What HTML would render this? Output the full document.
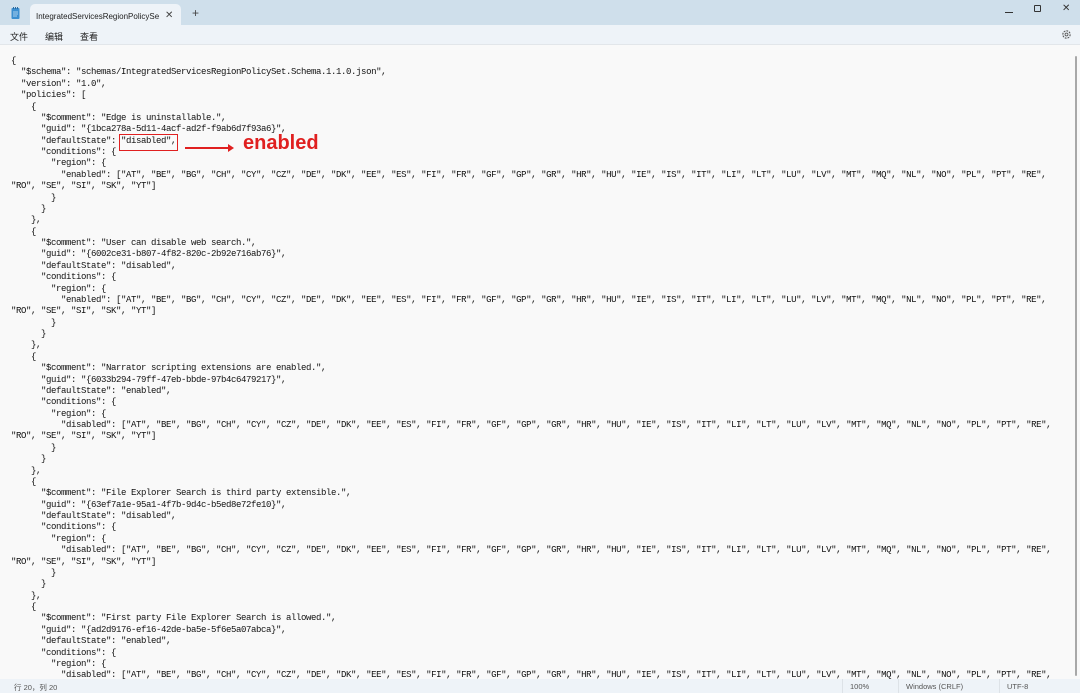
<!DOCTYPE html>
<html><head><meta charset="utf-8"><style>
*{margin:0;padding:0;box-sizing:border-box}
body{width:1080px;height:693px;overflow:hidden;background:#f9f9f9;font-family:"Liberation Sans","Noto Sans CJK SC",sans-serif;position:relative}
.title{position:absolute;left:0;top:0;width:1080px;height:25px;background:#cfdfeb}
.tab{position:absolute;left:30px;top:4px;width:151px;height:21px;background:#eef3f8;border-radius:5px 5px 0 0;font-size:8px;color:#222;padding:8px 0 0 6px}
.menu{position:absolute;left:0;top:25px;width:1080px;height:20px;background:#eef3f8;border-bottom:1px solid #e2e6ea;font-size:9px;color:#222}
.menu span{position:absolute;top:5px}
pre{position:absolute;left:11px;top:56px;font-family:"Liberation Mono",monospace;font-size:9px;letter-spacing:-0.4px;line-height:11.37px;color:#111;height:623px;overflow:hidden;width:1062px}
.status{position:absolute;left:0;top:679px;width:1080px;height:14px;background:#eef3f8;font-size:7.5px;color:#555}
.status span{position:absolute;top:3px}
.sep{position:absolute;top:0;width:1px;height:14px;background:#dde2e7}
</style></head><body>
<div class="title">
<svg style="position:absolute;left:11px;top:7px" width="9" height="12" viewBox="0 0 9 12"><rect x="0.5" y="1" width="8" height="11" rx="1" fill="#3d8fd0"/><rect x="2" y="0" width="1" height="2" fill="#2a6aa0"/><rect x="4" y="0" width="1" height="2" fill="#2a6aa0"/><rect x="6" y="0" width="1" height="2" fill="#2a6aa0"/><path d="M2 5h5M2 7h5M2 9h4" stroke="#cfe6f7" stroke-width="0.8"/></svg>
<div class="tab">IntegratedServicesRegionPolicySe<span style="position:absolute;left:135px;top:6px;font-size:10px;color:#444">✕</span></div>
<span style="position:absolute;left:192px;top:6px;font-size:12px;color:#444">+</span>
<div style="position:absolute;left:1005px;top:12px;width:8px;height:1px;background:#333"></div>
<div style="position:absolute;left:1034px;top:5px;width:7px;height:7px;border:1px solid #333;border-radius:1px"></div>
<span style="position:absolute;left:1062px;top:3px;font-size:10px;color:#333">✕</span>
</div>
<div class="menu"><span style="left:10px">文件</span><span style="left:45px">编辑</span><span style="left:80px">查看</span>
<svg style="position:absolute;left:1061px;top:4px" width="11" height="11" viewBox="0 0 12 12"><circle cx="6" cy="6" r="4" fill="none" stroke="#555" stroke-width="1.2" stroke-dasharray="2 1.1"/><circle cx="6" cy="6" r="1.6" fill="none" stroke="#555" stroke-width="0.9"/></svg></div>
<div style="position:absolute;left:1075px;top:56px;width:2px;height:620px;background:#a8a8a8;border-radius:1px"></div>
<pre>{
  "$schema": "schemas/IntegratedServicesRegionPolicySet.Schema.1.1.0.json",
  "version": "1.0",
  "policies": [
    {
      "$comment": "Edge is uninstallable.",
      "guid": "{1bca278a-5d11-4acf-ad2f-f9ab6d7f93a6}",
      "defaultState": "disabled",
      "conditions": {
        "region": {
          "enabled": ["AT", "BE", "BG", "CH", "CY", "CZ", "DE", "DK", "EE", "ES", "FI", "FR", "GF", "GP", "GR", "HR", "HU", "IE", "IS", "IT", "LI", "LT", "LU", "LV", "MT", "MQ", "NL", "NO", "PL", "PT", "RE",
"RO", "SE", "SI", "SK", "YT"]
        }
      }
    },
    {
      "$comment": "User can disable web search.",
      "guid": "{6002ce31-b807-4f82-820c-2b92e716ab76}",
      "defaultState": "disabled",
      "conditions": {
        "region": {
          "enabled": ["AT", "BE", "BG", "CH", "CY", "CZ", "DE", "DK", "EE", "ES", "FI", "FR", "GF", "GP", "GR", "HR", "HU", "IE", "IS", "IT", "LI", "LT", "LU", "LV", "MT", "MQ", "NL", "NO", "PL", "PT", "RE",
"RO", "SE", "SI", "SK", "YT"]
        }
      }
    },
    {
      "$comment": "Narrator scripting extensions are enabled.",
      "guid": "{6033b294-79ff-47eb-bbde-97b4c6479217}",
      "defaultState": "enabled",
      "conditions": {
        "region": {
          "disabled": ["AT", "BE", "BG", "CH", "CY", "CZ", "DE", "DK", "EE", "ES", "FI", "FR", "GF", "GP", "GR", "HR", "HU", "IE", "IS", "IT", "LI", "LT", "LU", "LV", "MT", "MQ", "NL", "NO", "PL", "PT", "RE",
"RO", "SE", "SI", "SK", "YT"]
        }
      }
    },
    {
      "$comment": "File Explorer Search is third party extensible.",
      "guid": "{63ef7a1e-95a1-4f7b-9d4c-b5ed8e72fe10}",
      "defaultState": "disabled",
      "conditions": {
        "region": {
          "disabled": ["AT", "BE", "BG", "CH", "CY", "CZ", "DE", "DK", "EE", "ES", "FI", "FR", "GF", "GP", "GR", "HR", "HU", "IE", "IS", "IT", "LI", "LT", "LU", "LV", "MT", "MQ", "NL", "NO", "PL", "PT", "RE",
"RO", "SE", "SI", "SK", "YT"]
        }
      }
    },
    {
      "$comment": "First party File Explorer Search is allowed.",
      "guid": "{ad2d9176-ef16-42de-ba5e-5f6e5a07abca}",
      "defaultState": "enabled",
      "conditions": {
        "region": {
          "disabled": ["AT", "BE", "BG", "CH", "CY", "CZ", "DE", "DK", "EE", "ES", "FI", "FR", "GF", "GP", "GR", "HR", "HU", "IE", "IS", "IT", "LI", "LT", "LU", "LV", "MT", "MQ", "NL", "NO", "PL", "PT", "RE",
</pre>
<div style="position:absolute;left:119px;top:134px;width:59px;height:17px;border:1.5px solid #e02020"></div>
<div style="position:absolute;left:185px;top:147px;width:44px;height:1.5px;background:#e02020"></div>
<div style="position:absolute;left:228px;top:144px;width:0;height:0;border-left:6px solid #e02020;border-top:4px solid transparent;border-bottom:4px solid transparent"></div>
<div style="position:absolute;left:243px;top:132px;font-size:20px;font-weight:bold;color:#e02020">enabled</div>
<div class="status"><span style="left:14px">行 20，列 20</span>
<div class="sep" style="left:842px"></div><span style="left:850px">100%</span>
<div class="sep" style="left:898px"></div><span style="left:906px">Windows (CRLF)</span>
<div class="sep" style="left:999px"></div><span style="left:1007px">UTF-8</span></div>
</body></html>
